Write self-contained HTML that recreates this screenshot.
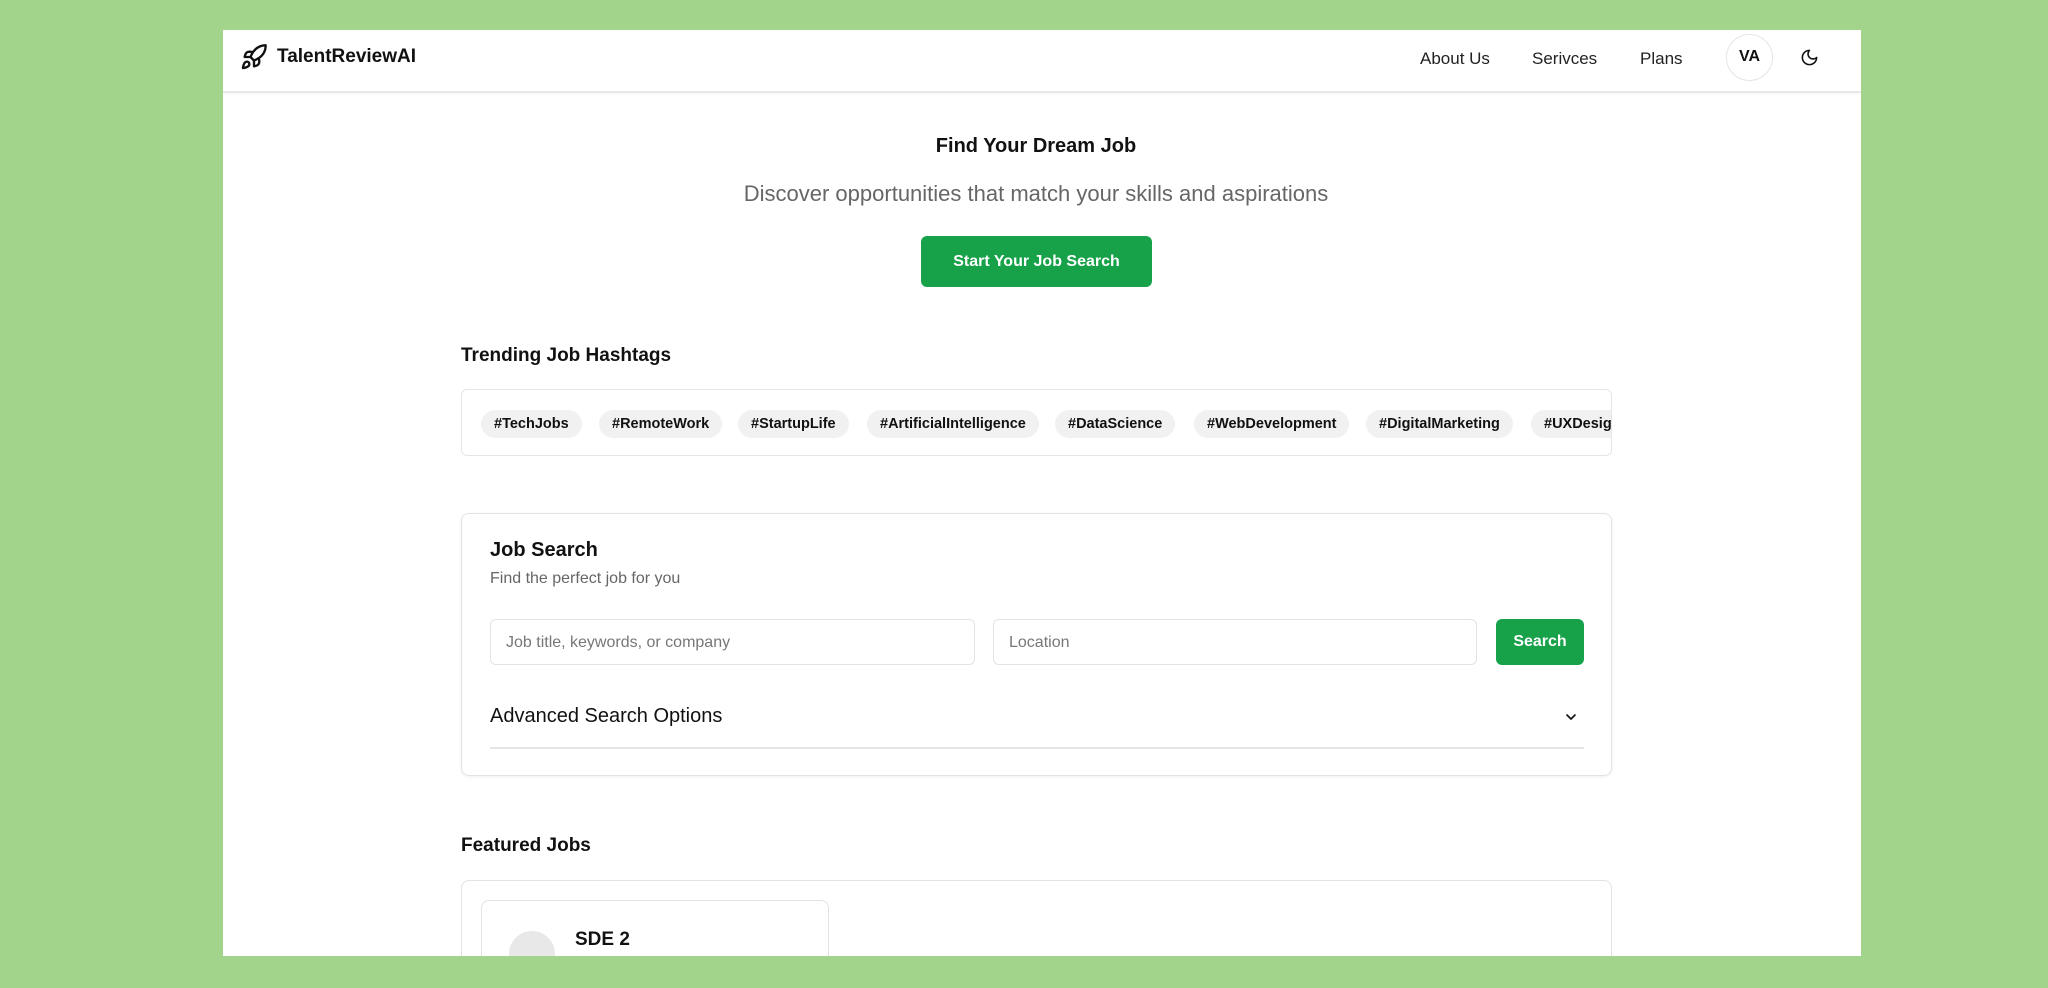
<!DOCTYPE html>
<html><head><meta charset="utf-8"><style>
*{box-sizing:border-box;margin:0;padding:0}
body{width:2048px;height:988px;background:#a2d48b;font-family:"Liberation Sans",sans-serif;color:#111;overflow:hidden;position:relative}
.panel{position:absolute;left:223px;top:30px;width:1638px;height:926px;background:#fff;overflow:hidden}
.nav{position:absolute;left:0;top:0;width:100%;height:63px;border-bottom:2px solid #e8e8e8;box-shadow:0 1px 3px rgba(0,0,0,.05)}
.abs{position:absolute}
.nl{font-size:17px;color:#222;top:19px}
.pill{position:absolute;top:20px;height:28px;line-height:28px;padding:0 13px;background:#f1f1f1;border-radius:14px;font-size:14.5px;font-weight:bold;white-space:nowrap}
.inp{position:absolute;top:105px;height:46px;border:1.5px solid #e3e3e3;border-radius:6px;font-size:16px;color:#777;padding:14px 15px}
</style></head><body>
<div class="panel">
 <div class="nav">
  <svg class="abs" style="left:17px;top:13px" width="28" height="28" viewBox="0 0 24 24" fill="none" stroke="#111" stroke-width="2" stroke-linecap="round" stroke-linejoin="round"><path d="M4.5 16.5c-1.5 1.26-2 5-2 5s3.74-.5 5-2c.71-.84.7-2.13-.09-2.91a2.18 2.18 0 0 0-2.91-.09z"/><path d="m12 15-3-3a22 22 0 0 1 2-3.950A12.88 12.88 0 0 1 22 2c0 2.72-.78 7.5-6 11a22.350 22.350 0 0 1-4 2z"/><path d="M9 12H4s.55-3.03 2-4c1.62-1.08 5 0 5 0"/><path d="M12 15v5s3.03-.55 4-2c1.08-1.62 0-5 0-5"/></svg>
  <div class="abs" style="left:54px;top:16px;font-size:19px;font-weight:bold">TalentReviewAI</div>
  <div class="abs nl" style="left:1197px">About Us</div>
  <div class="abs nl" style="left:1309px">Serivces</div>
  <div class="abs nl" style="left:1417px">Plans</div>
  <div class="abs" style="left:1503px;top:4px;width:47px;height:47px;border:1.5px solid #e5e5e5;border-radius:50%;text-align:center;line-height:44px;font-size:16px;font-weight:bold">VA</div>
  <svg class="abs" style="left:1577px;top:18px" width="19" height="19" viewBox="0 0 24 24" fill="none" stroke="#111" stroke-width="2" stroke-linecap="round" stroke-linejoin="round"><path d="M12 3a6 6 0 0 0 9 9 9 9 0 1 1-9-9Z"/></svg>
 </div>
 <div class="abs" style="left:0;width:1626px;top:105px;text-align:center;font-size:20px;font-weight:bold">Find Your Dream Job</div>
 <div class="abs" style="left:0;width:1626px;top:151px;text-align:center;font-size:22px;color:#666">Discover opportunities that match your skills and aspirations</div>
 <div class="abs" style="left:698px;top:206px;width:231px;height:51px;background:#17a24a;border-radius:6px;color:#fff;font-size:16px;font-weight:bold;text-align:center;line-height:51px">Start Your Job Search</div>
 <div class="abs" style="left:238px;top:315px;font-size:19px;font-weight:bold">Trending Job Hashtags</div>
 <div class="abs" style="left:238px;top:359px;width:1151px;height:67px;border:1.5px solid #e5e5e5;border-radius:6px;overflow:hidden">
  <div class="pill" style="left:19px">#TechJobs</div>
  <div class="pill" style="left:137px">#RemoteWork</div>
  <div class="pill" style="left:276px">#StartupLife</div>
  <div class="pill" style="left:405px">#ArtificialIntelligence</div>
  <div class="pill" style="left:593px">#DataScience</div>
  <div class="pill" style="left:732px">#WebDevelopment</div>
  <div class="pill" style="left:904px">#DigitalMarketing</div>
  <div class="pill" style="left:1069px">#UXDesign</div>
 </div>
 <div class="abs" style="left:238px;top:483px;width:1151px;height:263px;border:1.5px solid #e3e3e3;border-radius:8px;box-shadow:0 1px 3px rgba(0,0,0,.06)">
  <div class="abs" style="left:28px;top:25px;font-size:20px;font-weight:bold">Job Search</div>
  <div class="abs" style="left:28px;top:56px;font-size:16px;color:#666">Find the perfect job for you</div>
  <div class="inp" style="left:28px;width:485px">Job title, keywords, or company</div>
  <div class="inp" style="left:531px;width:484px">Location</div>
  <div class="abs" style="left:1034px;top:105px;width:88px;height:46px;background:#17a24a;border-radius:6px;color:#fff;font-size:16px;font-weight:bold;text-align:center;line-height:46px">Search</div>
  <div class="abs" style="left:28px;top:191px;font-size:20px">Advanced Search Options</div>
  <svg class="abs" style="left:1101px;top:195px" width="16" height="16" viewBox="0 0 24 24" fill="none" stroke="#111" stroke-width="2.5" stroke-linecap="round" stroke-linejoin="round"><path d="m6 9 6 6 6-6"/></svg>
  <div class="abs" style="left:28px;top:233px;width:1094px;height:2px;background:#e5e5e5"></div>
 </div>
 <div class="abs" style="left:238px;top:805px;font-size:19px;font-weight:bold">Featured Jobs</div>
 <div class="abs" style="left:238px;top:850px;width:1151px;height:120px;border:1.5px solid #e3e3e3;border-radius:8px">
  <div class="abs" style="left:19px;top:19px;width:348px;height:120px;border:1.5px solid #e3e3e3;border-radius:8px">
   <div class="abs" style="left:27px;top:30px;width:46px;height:46px;border-radius:50%;background:#e8e8e8"></div>
   <div class="abs" style="left:93px;top:28px;font-size:19px;font-weight:bold">SDE 2</div>
  </div>
 </div>
</div>
</body></html>
